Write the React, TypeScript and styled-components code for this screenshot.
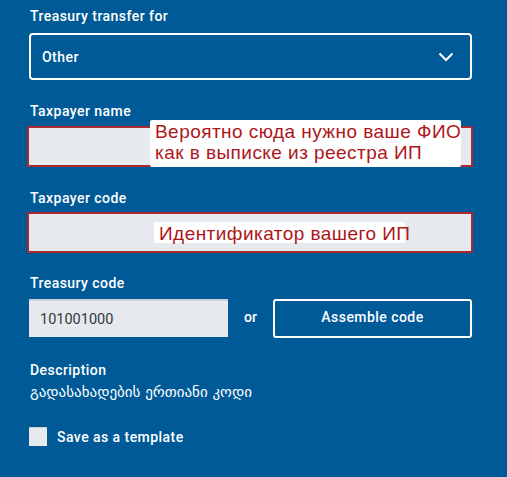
import React from "react";
import styled, { createGlobalStyle } from "styled-components";

const Global = createGlobalStyle`
  html, body { margin: 0; padding: 0; background: #005a97; }
  body { font-family: Roboto, "DejaVu Sans", sans-serif; }
`;

const Page = styled.div`
  width: 507px;
  height: 477px;
  background: #005a97;
  box-sizing: border-box;
  padding: 6px 35px 0 29px;
  display: flex;
  flex-direction: column;
  overflow: hidden;
`;

const Label = styled.div<{ $top?: number }>`
  color: #ffffff;
  font-size: 14px;
  font-weight: 500;
  letter-spacing: 0.45px;
  line-height: 20px;
  padding-left: 1px;
  margin-top: ${(p) => p.$top ?? 0}px;
`;

const Select = styled.div`
  margin-top: 7px;
  height: 47px;
  box-sizing: border-box;
  border: 2px solid #ffffff;
  border-radius: 4px;
  display: flex;
  align-items: center;
  justify-content: space-between;
  padding: 0 16px 0 11px;
  color: #ffffff;
  font-size: 14px;
  font-weight: 500;
  letter-spacing: 0.45px;
`;

const FieldWrap = styled.div<{ $top: number }>`
  position: relative;
  margin-top: ${(p) => p.$top}px;
  margin-left: -1px;
`;

const MarkedInput = styled.div`
  height: 41px;
  box-sizing: border-box;
  width: 446px;
  margin-left: -1px;
  background: #e6e9ee;
  border: 2px solid #a82a2e;
`;

const Note = styled.div<{ $left: number; $top: number; $w: number; $h: number }>`
  position: absolute;
  left: ${(p) => p.$left}px;
  top: ${(p) => p.$top}px;
  width: ${(p) => p.$w}px;
  height: ${(p) => p.$h}px;
  box-sizing: border-box;
  background: #ffffff;
  border-radius: 2px;
  color: #ad161b;
  font-family: "Liberation Sans", Arial, sans-serif;
  font-size: 19px;
  line-height: 21px;
  letter-spacing: 0.45px;
  padding: 1px 0 0 5px;
  white-space: nowrap;
`;

const CodeRow = styled.div`
  margin-top: 6px;
  display: flex;
  align-items: center;
  height: 38px;
`;

const CodeInput = styled.div`
  width: 199px;
  height: 38px;
  box-sizing: border-box;
  background: #e6e9ee;
  border-top: 2px solid #c9d1db;
  display: flex;
  align-items: center;
  padding-left: 11px;
  color: #333840;
  font-size: 14.5px;
  font-weight: 400;
`;

const Or = styled.div`
  width: 45px;
  text-align: center;
  color: #ffffff;
  font-size: 14px;
  font-weight: 500;
  padding-bottom: 2px;
`;

const OutlineButton = styled.div`
  width: 199px;
  height: 39px;
  box-sizing: border-box;
  border: 2px solid #ffffff;
  border-radius: 3px;
  display: flex;
  align-items: center;
  justify-content: center;
  color: #ffffff;
  font-size: 14px;
  font-weight: 500;
  letter-spacing: 0.45px;
  padding-bottom: 2px;
`;

const Value = styled.div`
  margin-top: 3px;
  color: #ffffff;
  font-family: "DejaVu Sans", sans-serif;
  font-size: 15px;
  line-height: 18px;
  padding-left: 1px;
`;

const CheckRow = styled.label`
  margin-top: 26px;
  display: flex;
  align-items: center;
  gap: 10px;
  color: #ffffff;
  font-size: 14px;
  font-weight: 500;
  letter-spacing: 0.45px;
`;

const Box = styled.span`
  width: 18px;
  height: 19px;
  background: #e6e9ee;
  border-top: 1px solid #c9d1db;
  box-sizing: border-box;
  display: inline-block;
`;

export default function App() {
  return (
    <>
      <Global />
      <Page>
        <Label>Treasury transfer for</Label>
        <Select>
          <span>Other</span>
          <svg width="16" height="10" viewBox="0 0 16 10" fill="none">
            <path d="M1.5 1.5 L8 8 L14.5 1.5" stroke="#ffffff" strokeWidth="2" />
          </svg>
        </Select>

        <Label $top={21}>Taxpayer name</Label>
        <FieldWrap $top={5}>
          <MarkedInput />
          <Note $left={122} $top={-6} $w={311} $h={47}>
            Вероятно сюда нужно ваше ФИО
            <br />
            как в выписке из реестра ИП
          </Note>
        </FieldWrap>

        <Label $top={21}>Taxpayer code</Label>
        <FieldWrap $top={4}>
          <MarkedInput />
          <Note $left={126} $top={10} $w={251} $h={21}>
            Идентификатор вашего ИП
          </Note>
        </FieldWrap>

        <Label $top={20}>Treasury code</Label>
        <CodeRow>
          <CodeInput>101001000</CodeInput>
          <Or>or</Or>
          <OutlineButton>Assemble code</OutlineButton>
        </CodeRow>

        <Label $top={23}>Description</Label>
        <Value>გადასახადების ერთიანი კოდი</Value>

        <CheckRow>
          <Box />
          <span>Save as a template</span>
        </CheckRow>
      </Page>
    </>
  );
}
